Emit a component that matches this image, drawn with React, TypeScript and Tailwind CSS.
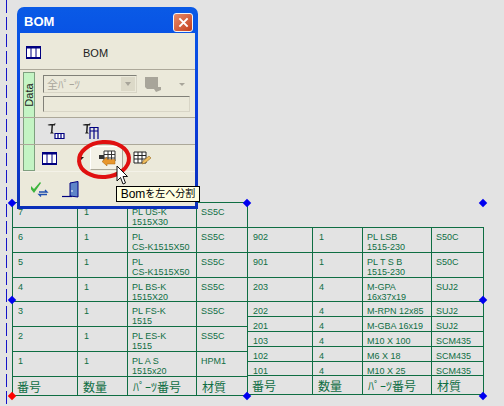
const leftRows = [
  { h: 25, no: "7", qty: "1", part: ["PL US-K", "1515X30"], mat: "SS5C" },
  { h: 25, no: "6", qty: "1", part: ["PL", "CS-K1515X50"], mat: "SS5C" },
  { h: 25, no: "5", qty: "1", part: ["PL", "CS-K1515X50"], mat: "SS5C" },
  { h: 24, no: "4", qty: "1", part: ["PL BS-K", "1515X20"], mat: "SS5C" },
  { h: 25, no: "3", qty: "1", part: ["PL FS-K", "1515"], mat: "SS5C" },
  { h: 25, no: "2", qty: "1", part: ["PL ES-K", "1515"], mat: "SS5C" },
  { h: 25, no: "1", qty: "1", part: ["PL A S", "1515x20"], mat: "HPM1" },
];

const rightRows = [
  { h: 25, no: "902", qty: "1", part: ["PL LSB", "1515-230"], mat: "S50C" },
  { h: 25, no: "901", qty: "1", part: ["PL T S B", "1515-230"], mat: "S50C" },
  { h: 24, no: "203", qty: "4", part: ["M-GPA", "16x37x19"], mat: "SUJ2" },
  { h: 15, no: "202", qty: "4", part: ["M-RPN 12x85"], mat: "SUJ2" },
  { h: 15, no: "201", qty: "4", part: ["M-GBA 16x19"], mat: "SUJ2" },
  { h: 15, no: "103", qty: "4", part: ["M10 X 100"], mat: "SCM435" },
  { h: 15, no: "102", qty: "4", part: ["M6 X 18"], mat: "SCM435" },
  { h: 14, no: "101", qty: "4", part: ["M10 X 25"], mat: "SCM435" },
];

type RowData = { h: number; no: string; qty: string; part: string[]; mat: string };

const Row = ({ row }: { row: RowData }) => (
  <div className="flex border-t border-[#0f6e43]" style={{ height: row.h }}>
    <div className="w-[65px] border-l border-[#0f6e43] pl-[5px] pt-[4px]">{row.no}</div>
    <div className="w-[50px] border-l border-[#0f6e43] pl-[6px] pt-[4px]">{row.qty}</div>
    <div className="w-[69px] border-l border-[#0f6e43] pl-[4px] pt-[4px]">
      {row.part.map((line) => (
        <div key={line} className="h-[10px]">{line}</div>
      ))}
    </div>
    <div className="flex-1 border-l border-[#0f6e43] pl-[4px] pt-[4px]">{row.mat}</div>
  </div>
);

const HeaderRow = () => (
  <div className="flex h-[20px] border-y border-[#0f6e43] text-[12px] leading-none font-['Noto_Sans_CJK_JP',sans-serif]">
    <div className="w-[65px] border-l border-[#0f6e43] pl-[4px] pt-[4px]">番号</div>
    <div className="w-[50px] border-l border-[#0f6e43] pl-[5px] pt-[4px]">数量</div>
    <div className="w-[69px] border-l border-[#0f6e43] pl-[5px] pt-[4px]">ﾊﾟｰﾂ番号</div>
    <div className="flex-1 border-l border-[#0f6e43] pl-[5px] pt-[4px]">材質</div>
  </div>
);

const Handle = ({ x, y, red }: { x: number; y: number; red?: boolean }) => (
  <div
    className={`absolute h-[6px] w-[6px] rotate-45 ${red ? "bg-[#ff0000]" : "bg-[#0000f0]"}`}
    style={{ left: x - 3, top: y - 3 }}
  />
);

const GridIcon = ({ className }: { className: string }) => (
  <svg viewBox="0 0 15 15" className={className}>
    <rect x="0.5" y="1.5" width="14" height="12" fill="#fff" stroke="#000080" />
    <rect x="0.5" y="1.5" width="14" height="2" fill="#000080" />
    <rect x="0.5" y="12" width="14" height="1.5" fill="#000080" />
    <path d="M5 2v11M10 2v11" stroke="#000080" />
  </svg>
);

const TextTableIcon = ({ right }: { right?: boolean }) => (
  <svg viewBox="0 0 18 18" className="h-[18px] w-[18px]">
    <path d="M0.5 3c2-2 6 0 8-2L8 3.5H6L5.5 10l1.5 1.5H3L4 10l.5-6.5H2z" fill="#222" />
    {right ? (
      <path d="M7.5 5.5h9M8 5v12M12 5v12M16 5v12M8 9h8" stroke="#000080" strokeWidth="1.2" fill="none" />
    ) : (
      <path d="M8 11.5h9v5H8zM11 12v4M14 12v4" stroke="#000080" strokeWidth="1.2" fill="#fff" />
    )}
  </svg>
);

const BomWindow = () => (
  <div className="absolute left-[17px] top-[7px] flex h-[202px] w-[181px] flex-col rounded-t-[7px] bg-gradient-to-b from-[#0a5ae6] via-[#0a3ee0] to-[#0a2fb8] px-[3px] pb-[3px]">
    <div className="flex h-[26px] shrink-0 items-center justify-between pl-[4px] pr-[2px] pt-[4px] text-[13px] font-bold text-white font-['Liberation_Sans',sans-serif]">
      <span>BOM</span>
      <div className="flex h-[19px] w-[20px] items-center justify-center rounded-[3px] border border-[#f4f4f4] bg-gradient-to-br from-[#e88a68] to-[#c23c18]">
        <svg viewBox="0 0 12 12" className="h-[11px] w-[11px]">
          <path d="M1.5 1.5l9 9M10.5 1.5l-9 9" stroke="#fff" strokeWidth="2.2" />
        </svg>
      </div>
    </div>
    <div className="flex flex-1 flex-col bg-[#ebe9da] text-[11px] text-[#222] font-['Liberation_Sans',sans-serif]">
      <div className="flex h-[36px] items-center pl-[6px] pt-[2px]">
        <GridIcon className="h-[15px] w-[15px]" />
        <span className="ml-[42px] pt-[1px]">BOM</span>
      </div>
      <div className="flex h-[48px] border-t border-[#aca899]">
        <div className="ml-[3px] mt-[2px] flex w-[12px] shrink-0 items-center justify-center border border-b-0 border-[#7f9f7f] bg-[#c4f4c4]">
          <span className="-rotate-90 text-[11px]">Data</span>
        </div>
        <div className="ml-[8px] mt-[5px] flex w-[147px] flex-col gap-[3px]">
          <div className="flex items-center">
            <div className="flex h-[18px] w-[94px] items-center justify-between border border-b-[#d8d5c6] border-r-[#d8d5c6] border-l-[#808078] border-t-[#808078] pl-[3px] pr-[1px] text-[#a8a59a] font-['Noto_Sans_CJK_JP',sans-serif]">
              <span className="text-[11px]">全ﾊﾟｰﾂ</span>
              <div className="flex h-[14px] w-[14px] items-center justify-center bg-[#dcd9c8]">
                <div className="h-0 w-0 border-x-[3px] border-t-[4px] border-x-transparent border-t-[#a8a59a]" />
              </div>
            </div>
            <svg viewBox="0 0 17 15" className="ml-[8px] h-[15px] w-[17px]">
              <path d="M0 0h13v10h3v3l-5 2-2-3H2L0 10z" fill="#a8a59a" />
            </svg>
            <div className="ml-[17px] h-0 w-0 border-x-[3px] border-t-[3px] border-x-transparent border-t-[#a8a59a]" />
          </div>
          <div className="h-[16px] border border-b-[#d8d5c6] border-r-[#d8d5c6] border-l-[#808078] border-t-[#808078]" />
        </div>
      </div>
      <div className="flex h-[27px] border-t border-[#aca899] bg-[#e3e3e3]">
        <div className="ml-[3px] w-[12px] shrink-0 border-x border-[#7f9f7f] bg-[#c4f4c4]" />
        <div className="ml-[12px] flex items-center gap-[17px]">
          <TextTableIcon />
          <TextTableIcon right />
        </div>
      </div>
      <div className="flex h-[28px] border-y border-[#aca899] border-b-[#f4f2e8]">
        <div className="ml-[3px] w-[12px] shrink-0 border border-t-0 border-[#7f9f7f] bg-[#c4f4c4]" />
        <div className="ml-[7px] flex items-center">
          <GridIcon className="h-[15px] w-[15px]" />
          <div className="ml-[21px] h-0 w-0 border-x-[3px] border-t-[3px] border-x-transparent border-t-[#111]" />
          <div className="ml-[6px] flex h-[24px] w-[33px] items-center justify-center border border-t-white border-l-white border-r-[#aca899] border-b-[#aca899] bg-[#f3f1e6]">
            <svg viewBox="0 0 18 16" className="h-[16px] w-[18px]">
              <path d="M6 1h11v10H6z" fill="#fff" stroke="#333" />
              <path d="M6 4.5h11M6 8h11M10 1v10M13.5 1v10" stroke="#333" />
              <path d="M1 5h5v4H1z" fill="#333" />
              <path d="M4 11.5L9 7v2.5h8V14H9v2z" fill="#e8962c" stroke="#a66410" strokeWidth="0.5" />
            </svg>
          </div>
          <svg viewBox="0 0 18 16" className="ml-[10px] h-[16px] w-[18px]">
            <path d="M1 2h12v11H1z" fill="#fff" stroke="#222" />
            <path d="M1 5.5h12M1 9h12M5 2v11M9 2v11" stroke="#222" />
            <path d="M9 14l1-3 6-5 2 2-6 5z" fill="#f0c060" stroke="#9a6a20" strokeWidth="0.6" />
          </svg>
        </div>
      </div>
      <div className="flex flex-1 items-center pl-[11px]">
        <svg viewBox="0 0 18 16" className="h-[16px] w-[18px]">
          <path d="M0 5l3 3 6-7 1 1-7 10-4-5z" fill="#3cb43c" />
          <path d="M8 11h8l-2-2M16 13.5H8l2 2" stroke="#1f4fb0" strokeWidth="1.3" fill="none" />
        </svg>
        <svg viewBox="0 0 17 17" className="ml-[13px] h-[17px] w-[17px]">
          <path d="M0 15.5h10" stroke="#000080" strokeWidth="1.2" />
          <path d="M8 2l8-1.5V16L8 15z" fill="#5f84c8" stroke="#000080" />
          <path d="M10 9v2" stroke="#fff" />
        </svg>
      </div>
    </div>
  </div>
);

const App = () => {
  return (
    <div className="relative h-[406px] w-[504px] overflow-hidden bg-[#e3e3e3] pl-[12px] pt-[202px] text-[9px] leading-[10px] text-[#0f6e43] font-['Liberation_Sans',sans-serif]">
      <div className="absolute left-[6px] top-0 h-full w-[1px] bg-[repeating-linear-gradient(to_bottom,#1414c8_0,#1414c8_13px,transparent_13px,transparent_17px)]" />
      <div className="flex">
        <div className="w-[235px]">
          {leftRows.map((row) => (
            <Row key={row.no} row={row} />
          ))}
          <HeaderRow />
        </div>
        <div className="w-[237px]">
          <div className="h-[25px] border-l border-[#0f6e43]" />
          <div className="border-r border-[#0f6e43]">
            {rightRows.map((row) => (
              <Row key={row.no} row={row} />
            ))}
            <HeaderRow />
          </div>
        </div>
      </div>

      <Handle x={12} y={203} />
      <Handle x={247} y={203} />
      <Handle x={483} y={203} />
      <Handle x={12} y={300} />
      <Handle x={483} y={300} />
      <Handle x={12} y={396} red />
      <Handle x={247} y={396} />
      <Handle x={483} y={396} />

      <BomWindow />

      <svg viewBox="0 0 56 44" className="absolute left-[76px] top-[138px] h-[44px] w-[56px]">
        <ellipse cx="28" cy="21.5" rx="25" ry="17.5" fill="none" stroke="#e01010" strokeWidth="4" transform="rotate(-4 28 21.5)" />
      </svg>
      <svg viewBox="0 0 12 21" className="absolute left-[116px] top-[165px] h-[21px] w-[12px]">
        <path d="M1 1v15l3.5-3.5L7 19l2.5-1L7 11.5h4.5z" fill="#fff" stroke="#111" />
      </svg>
      <div className="absolute left-[116px] top-[186px] flex h-[16px] w-[84px] items-center justify-center whitespace-nowrap border border-black bg-[#ffffe1] text-[10px] text-black font-['Liberation_Sans','Noto_Sans_CJK_JP',sans-serif]">
        <span className="text-[12px]">Bom</span>を左へ分割
      </div>
    </div>
  );
};

export default App;
